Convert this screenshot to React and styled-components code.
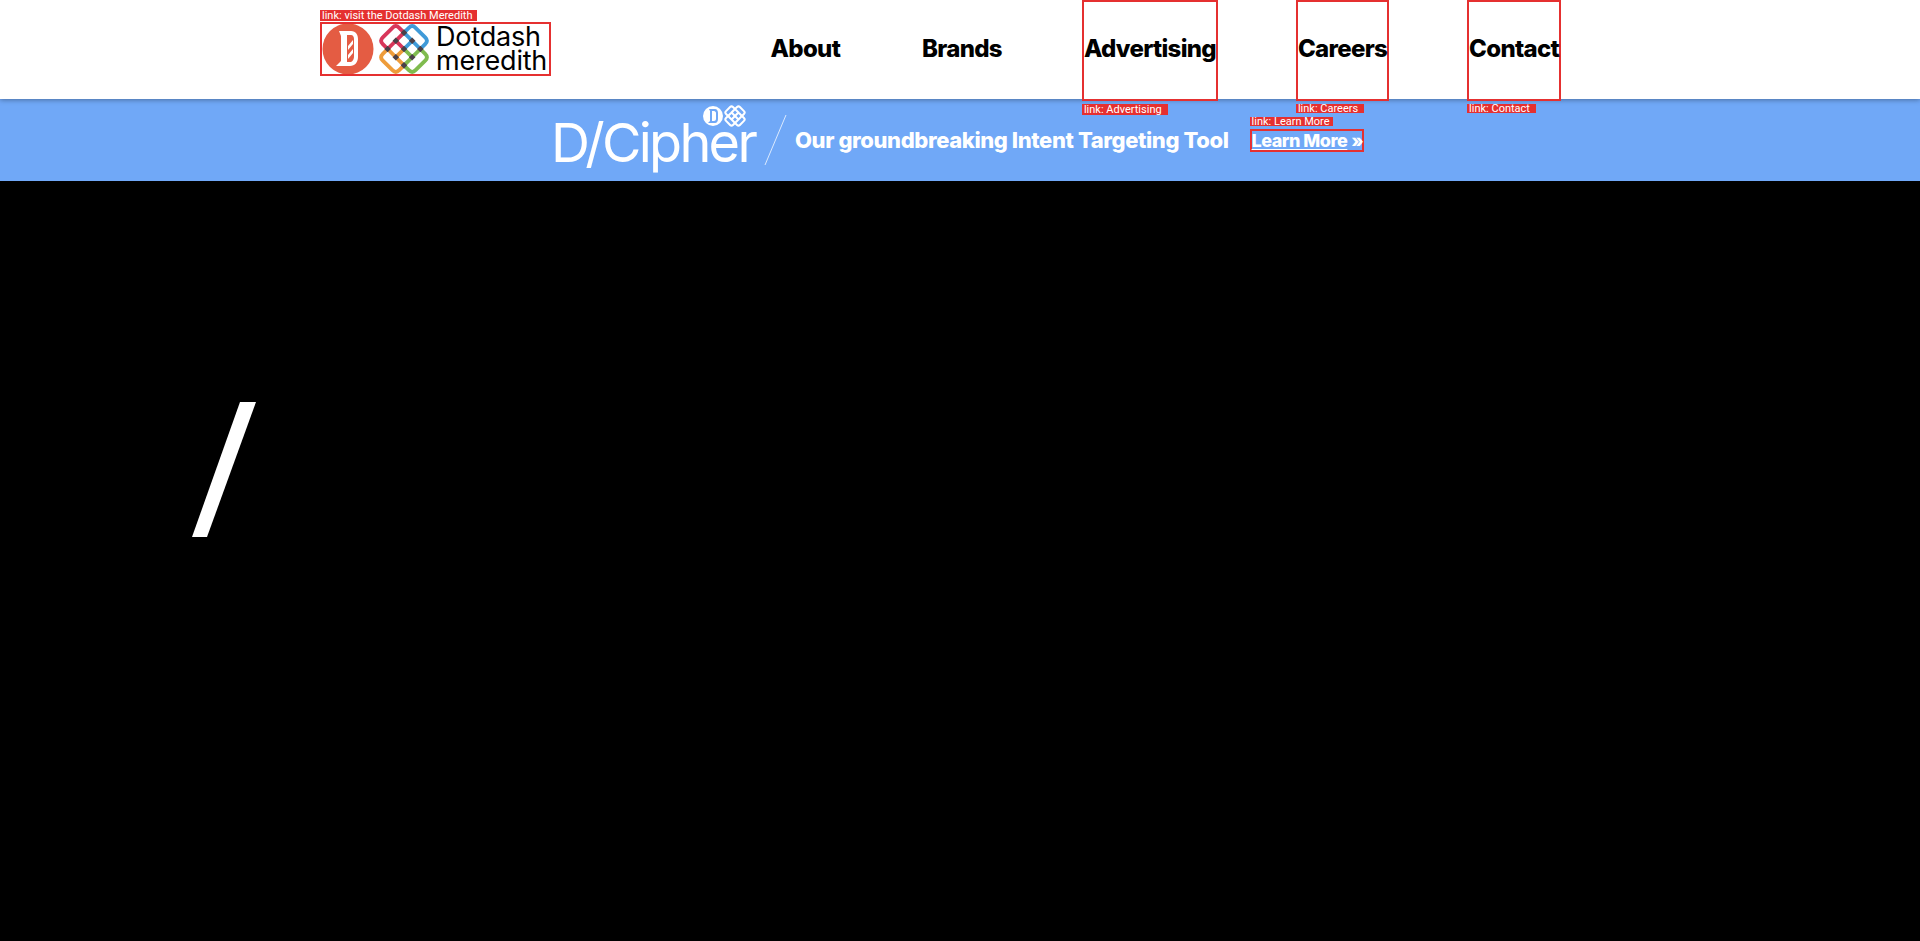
import React from "react";
import styled, { createGlobalStyle } from "styled-components";

const navLinks = [
  { name: "About" },
  { name: "Brands" },
  { name: "Advertising", flagged: true, tagHeight: 11 },
  { name: "Careers", flagged: true, tagHeight: 9 },
  { name: "Contact", flagged: true, tagHeight: 9 },
];

const knotLobes = [
  { color: "#d8365a", sx: 1, sy: 1 },
  { color: "#3f9ad8", sx: -1, sy: 1 },
  { color: "#ee9c3a", sx: 1, sy: -1 },
  { color: "#7fbb4e", sx: -1, sy: -1 },
];

const knotCrossings = [
  [0, -17],
  [-8.5, -8.5],
  [8.5, -8.5],
  [-17, 0],
  [0, 0],
  [17, 0],
  [-8.5, 8.5],
  [8.5, 8.5],
  [0, 17],
];

// top-left quadrant of the knot, mirrored for the other three
const knotLobePath =
  "M0 -17 L-5 -22 Q-8.5 -25.5 -12 -22 L-22 -12 Q-25.5 -8.5 -22 -5 L-17 0 M0 -17 L-17 0 M0 0 L-8.5 -8.5";

const GlobalStyle = createGlobalStyle`
  html, body {
    margin: 0;
    padding: 0;
    height: 100%;
    background: #000;
    font-family: Inter, "Liberation Sans", sans-serif;
  }
  #root {
    height: 100%;
  }
`;

const Page = styled.div`
  height: 941px;
  display: flex;
  flex-direction: column;
  overflow: hidden;
  background: #000;
`;

const Header = styled.header`
  position: relative;
  z-index: 2;
  height: 99px;
  flex: none;
  display: flex;
  align-items: flex-start;
  justify-content: space-between;
  padding: 0 359px 0 320px;
  background: #fff;
  box-shadow: 0 1px 5px rgba(0, 0, 0, 0.35);
`;

const Tag = styled.span`
  position: absolute;
  left: -2px;
  top: ${(p) => p.$top}px;
  height: ${(p) => p.$height}px;
  width: ${(p) => (p.$width ? `${p.$width}px` : "auto")};
  padding: 0 ${(p) => p.$pad || 3}px 0 2px;
  box-sizing: border-box;
  background: #e53030;
  color: #fff;
  font: 400 11px/${(p) => p.$height}px Roboto, "Liberation Sans", sans-serif;
  letter-spacing: 0;
  white-space: nowrap;
`;

const LogoLink = styled.a`
  position: relative;
  margin-top: 22px;
  width: 231px;
  height: 54px;
  box-sizing: border-box;
  border: 2px solid #e53030;
  display: flex;
  align-items: center;
  color: #000;
  text-decoration: none;
`;

const LogoWords = styled.span`
  margin-left: 6px;
  display: flex;
  flex-direction: column;
  font: 400 27px/24px Inter, sans-serif;
  letter-spacing: -0.2px;
  color: #000;
`;

const Nav = styled.nav`
  display: flex;
  gap: 78px;
  align-items: flex-start;
`;

const NavLink = styled.a`
  position: relative;
  height: 101px;
  box-sizing: border-box;
  display: flex;
  align-items: center;
  padding-bottom: 5px;
  border: 2px solid ${(p) => (p.$flagged ? "#e53030" : "transparent")};
  color: #000;
  font-size: 24px;
  font-weight: 800;
  letter-spacing: -0.7px;
  white-space: nowrap;
  text-decoration: none;
`;

const Banner = styled.section`
  height: 82px;
  flex: none;
  display: flex;
  align-items: center;
  padding-left: 551px;
  background: #70a8f7;
  color: #fff;
`;

const Brand = styled.div`
  position: relative;
  width: 203px;
  padding-top: 5px;
  font: 400 54px/60px Inter, sans-serif;
  letter-spacing: -2.7px;
  white-space: nowrap;
`;

const BrandMarks = styled.span`
  position: absolute;
  left: 152px;
  top: -3px;
  display: flex;
  gap: 1px;
  align-items: center;
`;

const Divider = styled.svg`
  margin-left: 10px;
  flex: none;
`;

const Pitch = styled.span`
  margin-left: 7px;
  font-size: 22px;
  font-weight: 800;
  letter-spacing: -0.4px;
  white-space: nowrap;
`;

const LearnLink = styled.a`
  position: relative;
  margin-left: 21px;
  box-sizing: border-box;
  width: 114px;
  height: 23px;
  display: flex;
  align-items: center;
  border: 2px solid #e53030;
  color: #fff;
  font-size: 18px;
  font-weight: 800;
  letter-spacing: -0.5px;
  white-space: nowrap;
  text-decoration: none;
`;

const Underlined = styled.span`
  text-decoration: underline;
  text-underline-offset: 2px;
`;

const Chevrons = styled.span`
  margin-left: 4px;
`;

const Hero = styled.main`
  flex: 1;
  padding: 221px 0 0 192px;
  background: #000;
`;

const Slash = styled.svg`
  display: block;
`;

function OrangeBadge() {
  return (
    <svg width="52" height="50" viewBox="-26 -25 52 50" aria-hidden="true">
      <circle r="25.5" fill="#e45c43" />
      <path
        d="M-9 -18H3C8 -18 10 -14 10 -10V8C10 13 7 17 2 17H-12L-7 12V-13Z"
        fill="#fff"
      />
      <path d="M-1 -14H3C5 -14 6 -12 6 -10V7C6 11 4 13 2 13H-1Z" fill="#e45c43" />
      <path d="M0 -3L5 -9V-5L0 1ZM0 6L5 0V4L0 10Z" fill="#fff" />
    </svg>
  );
}

function KnotMark({ size, mono, gapLeft }) {
  return (
    <svg
      width={size}
      height={size}
      viewBox="-27 -27 54 54"
      aria-hidden="true"
      style={{ marginLeft: gapLeft }}
    >
      {knotLobes.map((l) => (
        <path
          key={l.color}
          d={knotLobePath}
          fill="none"
          stroke={mono || l.color}
          strokeWidth={mono ? 5 : 4}
          strokeLinecap="round"
          transform={`scale(${l.sx} ${l.sy})`}
        />
      ))}
      {!mono &&
        knotCrossings.map(([x, y]) => (
          <rect
            key={`${x}/${y}`}
            x={x - 2.4}
            y={y - 2.4}
            width="4.8"
            height="4.8"
            fill="#4a4048"
            transform={`rotate(45 ${x} ${y})`}
          />
        ))}
    </svg>
  );
}

function MiniBadge() {
  return (
    <svg width="20" height="20" viewBox="-10 -10 20 20" aria-hidden="true">
      <circle r="10" fill="#fff" />
      <path d="M-4 -7H2C4 -7 5 -5 5 -3V3C5 5 4 7 2 7H-5L-3 5V-5Z" fill="#70a8f7" />
      <path d="M-1 -5H1C2 -5 3 -4 3 -3V3C3 4 2 5 1 5H-1Z" fill="#fff" />
    </svg>
  );
}

export default function App() {
  return (
    <>
      <GlobalStyle />
      <Page>
        <Header>
          <LogoLink href="#">
            <Tag $top={-14} $height={11} $width={157}>link: visit the Dotdash Meredith</Tag>
            <OrangeBadge />
            <KnotMark size={52} gapLeft={4} />
            <LogoWords>
              <span>Dotdash</span>
              <span>meredith</span>
            </LogoWords>
          </LogoLink>
          <Nav>
            {navLinks.map((link) => (
              <NavLink key={link.name} href="#" $flagged={link.flagged}>
                {link.name}
                {link.flagged && (
                  <Tag $top={102} $height={link.tagHeight} $pad={6}>link: {link.name}</Tag>
                )}
              </NavLink>
            ))}
          </Nav>
        </Header>
        <Banner>
          <Brand>
            D/Cipher
            <BrandMarks>
              <MiniBadge />
              <KnotMark size={22} mono="#fff" />
            </BrandMarks>
          </Brand>
          <Divider width="24" height="52" viewBox="0 0 24 52" aria-hidden="true">
            <line x1="1" y1="51" x2="22" y2="1" stroke="#fff" strokeOpacity="0.75" strokeWidth="1" />
          </Divider>
          <Pitch>Our groundbreaking Intent Targeting Tool</Pitch>
          <LearnLink href="#">
            <Tag $top={-14} $height={9} $pad={3}>link: Learn More</Tag>
            <Underlined>Learn More</Underlined>
            <Chevrons>»</Chevrons>
          </LearnLink>
        </Banner>
        <Hero>
          <Slash width="64" height="135" viewBox="0 0 64 135" aria-hidden="true">
            <polygon points="48,0 64,0 15,135 0,135" fill="#fff" />
          </Slash>
        </Hero>
      </Page>
    </>
  );
}
